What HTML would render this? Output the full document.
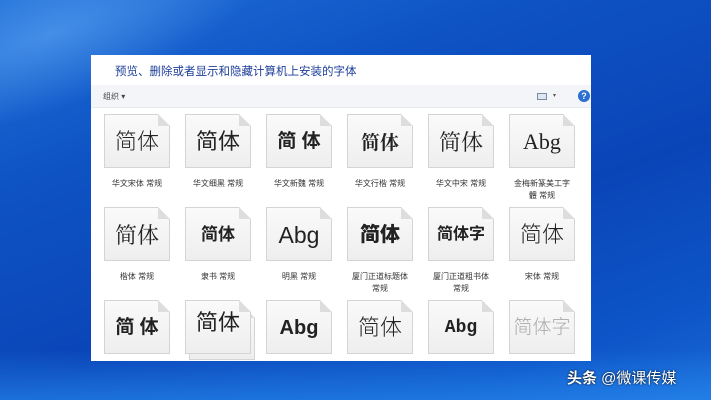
<!DOCTYPE html><html><head><meta charset="utf-8"><style>
*{margin:0;padding:0;box-sizing:border-box}
body{width:711px;height:400px;overflow:hidden;position:relative;font-family:"Liberation Sans","Noto Sans CJK SC",sans-serif;
background:linear-gradient(160deg,#1f6fd8 0%,#0e52c4 30%,#0a45b8 60%,#0d55c8 85%,#1a6ad8 100%)}
.streak{position:absolute;left:-120px;top:-60px;width:420px;height:160px;transform:rotate(-20deg);background:radial-gradient(ellipse at 40% 50%,rgba(120,190,255,.45),rgba(60,140,240,0) 65%)}
.bot{position:absolute;left:0;right:0;bottom:0;height:50px;background:linear-gradient(180deg,rgba(30,120,230,0),rgba(40,140,240,.6))}
.win{position:absolute;left:91px;top:55px;width:500px;height:306px;background:#fff;overflow:hidden}
.title{position:absolute;left:24px;top:8px;font-size:11.5px;color:#1e3e9a}
.tb{position:absolute;left:0;top:30px;width:100%;height:23px;background:#f3f5f8;border-bottom:1px solid #e6e9ee}
.tb .o{position:absolute;left:12px;top:6px;font-size:8px;color:#444}
.tb .v{position:absolute;left:446px;top:8px;width:10px;height:7px;border:1px solid #7a8aa0;background:#dde6f2}
.tb .ar{position:absolute;left:462px;top:7px;font-size:6px;color:#555}
.tb .h{position:absolute;left:487px;top:5px;width:12px;height:12px;border-radius:50%;background:#2b6fd0;color:#fff;font-size:9px;font-weight:bold;text-align:center;line-height:12px}
.it{position:absolute;width:66px;height:54px;background:linear-gradient(180deg,#fafafa,#eeeeee);border:1px solid #d4d4d4;box-shadow:0 1px 1px rgba(0,0,0,.08);
clip-path:polygon(0 0,54px 0,66px 12px,66px 54px,0 54px);font-size:22px;text-align:center;line-height:54px;color:#222}
.it::after{content:"";position:absolute;right:-1px;top:-1px;width:12px;height:12px;background:linear-gradient(225deg,#fff 50%,#ddd 50%)}
.lb{position:absolute;width:80px;text-align:center;font-size:8px;color:#333;line-height:12px}
.wm{position:absolute;left:567px;top:367px;font-size:15px;color:#fff;text-shadow:0 0 2px #000}
</style></head><body>
<div class="streak"></div><div class="bot"></div>
<div class="win">
<div class="title">预览、删除或者显示和隐藏计算机上安装的字体</div>
<div class="tb"><span class="o">组织 ▾</span><span class="v"></span><span class="ar">▾</span><span class="h">?</span></div>

<div class="it" style="left:13px;top:59px;font-weight:300">简体</div>
<div class="it" style="left:94px;top:59px">简体</div>
<div class="it" style="left:175px;top:59px;font-weight:bold;font-size:19px">简 体</div>
<div class="it" style="left:256px;top:59px;font-weight:bold;font-size:19px;font-family:'Noto Serif CJK SC',serif">简体</div>
<div class="it" style="left:337px;top:59px;font-family:'Noto Serif CJK SC',serif">简体</div>
<div class="it" style="left:418px;top:59px;font-family:'Liberation Serif',serif">Abg</div>
<div class="lb" style="left:6px;top:123px">华文宋体 常规</div>
<div class="lb" style="left:87px;top:123px">华文细黑 常规</div>
<div class="lb" style="left:168px;top:123px">华文新魏 常规</div>
<div class="lb" style="left:249px;top:123px">华文行楷 常规</div>
<div class="lb" style="left:330px;top:123px">华文中宋 常规</div>
<div class="lb" style="left:411px;top:123px">金梅新篆美工字<br>體 常规</div>

<div class="it" style="left:13px;top:152px;font-family:'Noto Serif CJK SC',serif">简体</div>
<div class="it" style="left:94px;top:152px;font-weight:bold;font-size:17px">简体</div>
<div class="it" style="left:175px;top:152px;font-size:23px">Abg</div>
<div class="it" style="left:256px;top:152px;font-weight:900;font-size:20px">简体</div>
<div class="it" style="left:337px;top:152px;font-weight:bold;font-size:16px">简体字</div>
<div class="it" style="left:418px;top:152px;font-weight:300">简体</div>
<div class="lb" style="left:6px;top:216px">楷体 常规</div>
<div class="lb" style="left:87px;top:216px">隶书 常规</div>
<div class="lb" style="left:168px;top:216px">明黑 常规</div>
<div class="lb" style="left:249px;top:216px">厦门正道标题体<br>常规</div>
<div class="lb" style="left:330px;top:216px">厦门正道粗书体<br>常规</div>
<div class="lb" style="left:411px;top:216px">宋体 常规</div>

<div class="it" style="left:13px;top:245px;font-weight:bold;font-size:19px">简 体</div>
<div class="it" style="left:98px;top:251px"></div>
<div class="it" style="left:94px;top:245px;line-height:44px">简体</div>
<div class="it" style="left:175px;top:245px;font-weight:bold;font-size:20px">Abg</div>
<div class="it" style="left:256px;top:245px;font-weight:300">简体</div>
<div class="it" style="left:337px;top:245px;font-family:'Liberation Mono',monospace;font-weight:bold;font-size:18px">Abg</div>
<div class="it" style="left:418px;top:245px;color:#aaa;font-weight:300;font-size:19px">简体字</div>
</div>
<div class="wm"><b>头条</b> @微课传媒</div>
</body></html>
